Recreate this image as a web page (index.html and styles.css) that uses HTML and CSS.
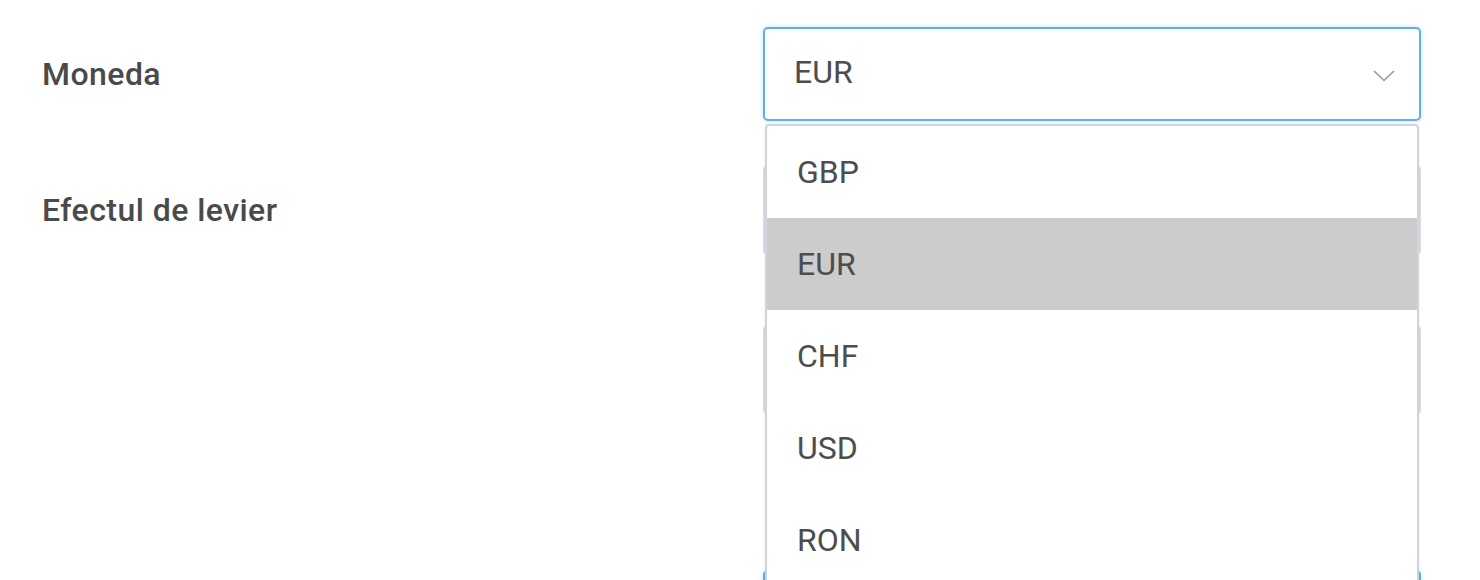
FILE: index.html
```html
<!DOCTYPE html>
<html lang="ro">
<head>
    <meta charset="UTF-8">
    <meta name="viewport" content="width=device-width, initial-scale=1.0">
    <title>Cont</title>
    <link rel="stylesheet" href="styles.css">
</head>
<body>
    <div class="form">
        <div class="row row-first">
            <label class="label">Moneda</label>
            <div class="select select-open">
                <span class="value">EUR</span>
                <svg class="chevron" width="22" height="12" viewBox="0 0 22 12">
                    <path d="M1 1 L11 10.5 L21 1" fill="none" stroke="#9a9a9a" stroke-width="1.6"/>
                </svg>
                <ul class="menu">
                    <li class="option">GBP</li>
                    <li class="option active">EUR</li>
                    <li class="option">CHF</li>
                    <li class="option">USD</li>
                    <li class="option">RON</li>
                </ul>
            </div>
        </div>
        <div class="row row-second">
            <label class="label">Efectul de levier</label>
            <div class="select"></div>
        </div>
        <div class="row row-third">
            <label class="label"></label>
            <div class="select"></div>
        </div>
        <div class="row row-fourth">
            <label class="label"></label>
            <div class="select focused"></div>
        </div>
    </div>
</body>
</html>
```

FILE: styles.css
```css
body {
    margin: 0;
    background: #fff;
    font-family: Roboto, "Liberation Sans", sans-serif;
    color: #4a4a4a;
}

.form {
    padding: 27px 0 0 42px;
}

.row {
    display: grid;
    grid-template-columns: 721px 658px;
    align-items: center;
}

.row-first {
    margin-bottom: 44px;
}

.row-second {
    margin-bottom: 70px;
}

.row-third {
    margin-bottom: 155px;
}

.label {
    font-size: 32px;
    font-weight: 500;
    letter-spacing: 0.45px;
}

.select {
    position: relative;
    box-sizing: border-box;
    height: 90px;
    border: 2px solid #dcdce3;
    border-radius: 5px;
    background: #fff;
}

.select-open,
.focused {
    height: 94px;
    border-color: #62aeec;
    box-shadow: 0 0 5px rgba(98, 174, 236, 0.35);
}

.value {
    position: absolute;
    left: 29px;
    top: 50%;
    transform: translateY(-55%);
    font-size: 32px;
    color: #4d4d4d;
}

.chevron {
    position: absolute;
    right: 24px;
    top: 41px;
}

/* dropdown list opened under the select */
.menu {
    position: absolute;
    z-index: 2;
    top: calc(100% + 5px);
    left: 0;
    right: 0;
    margin: 0;
    padding: 0;
    list-style: none;
    border: 2px solid #d2d3dd;
    border-radius: 4px;
    background: #fff;
    box-shadow: 0 2px 4px rgba(0, 0, 0, 0.06);
}

.option {
    height: 92px;
    line-height: 92px;
    padding-left: 30px;
    font-size: 32px;
    color: #4d4d4d;
}

.option.active {
    background: #cccccc;
}
```
